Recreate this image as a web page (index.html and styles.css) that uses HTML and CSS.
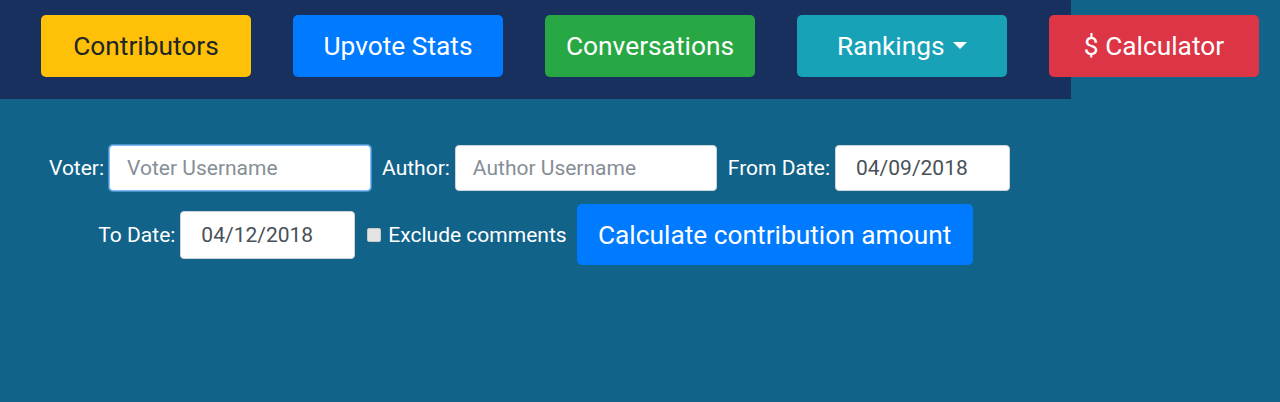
FILE: index.html
```html
<!DOCTYPE html>
<html lang="en">
<head>
  <meta charset="UTF-8">
  <title>Contribution Calculator</title>
  <link rel="stylesheet" href="styles.css">
</head>
<body>
  <div id="nav">
    <button class="navBtn yellow">Contributors</button>
    <button class="navBtn blue">Upvote Stats</button>
    <button class="navBtn green">Conversations</button>
    <button class="navBtn teal">Rankings <span class="caret"></span></button>
    <button class="navBtn red">$ Calculator</button>
  </div>

  <div id="form">
    <div class="row first">
      <label class="lbl">Voter:</label>
      <input class="field user focus" type="text" placeholder="Voter Username">
      <label class="lbl gapL">Author:</label>
      <input class="field user" type="text" placeholder="Author Username">
      <label class="lbl gapL">From Date:</label>
      <input class="field date" type="text" value="04/09/2018">
    </div>
    <div class="row">
      <label class="lbl">To Date:</label>
      <input class="field date tall" type="text" value="04/12/2018">
      <input class="check" type="checkbox" id="excl">
      <label class="lbl checkLbl" for="excl">Exclude comments</label>
      <button id="calcBtn">Calculate contribution amount</button>
    </div>
  </div>
</body>
</html>
```

FILE: styles.css
```css
body {
  font-family: Roboto, 'Liberation Sans', sans-serif;
  margin: 0;
  background-color: #12638a;
  color: white;
  overflow: hidden;
}
#nav {
  width: 1071px;
  height: 99px;
  background-color: #17305e;
  display: flex;
  align-items: center;
  padding-left: 41px;
  box-sizing: border-box;
  gap: 42px;
}
.navBtn {
  flex-shrink: 0;
  width: 210px;
  height: 62px;
  margin-top: -7px;
  border: none;
  border-radius: 5px;
  font-family: inherit;
  font-size: 26.3px;
  color: white;
  cursor: pointer;
}
.yellow { background-color: #ffc107; color: #212529; }
.blue { background-color: #007bff; }
.green { background-color: #28a745; }
.teal { background-color: #17a2b8; }
.red { background-color: #dc3545; }
.caret {
  display: inline-block;
  width: 0;
  height: 0;
  margin-left: 2px;
  vertical-align: 6px;
  border-top: 7px solid white;
  border-left: 7px solid transparent;
  border-right: 7px solid transparent;
}
#form {
  width: 1071px;
  padding-top: 46px;
  display: flex;
  flex-direction: column;
  gap: 13px;
}
.row {
  display: flex;
  justify-content: center;
  align-items: center;
}
.row.first {
  padding-right: 12px;
}
.lbl {
  font-size: 21px;
  margin-right: 5px;
}
.gapL {
  margin-left: 11px;
}
.field {
  height: 46px;
  box-sizing: border-box;
  border: 1px solid #ced4da;
  border-radius: 4px;
  background: white;
  font-family: inherit;
  font-size: 21px;
  color: #495057;
  outline: none;
}
.field::placeholder {
  color: #868e96;
}
.user {
  width: 262px;
  padding-left: 17px;
}
.focus {
  border-color: #80bdff;
  box-shadow: 0 0 0 1px rgba(128, 189, 255, 0.5);
}
.date {
  width: 175px;
  padding-left: 20px;
}
.tall {
  height: 48px;
}
.check {
  appearance: none;
  width: 14px;
  height: 14px;
  margin: 0 7px 0 12px;
  background: #e4e4e4;
  border: 1px solid #c8c8c8;
  border-radius: 2px;
}
.checkLbl {
  margin-right: 10px;
}
#calcBtn {
  width: 396px;
  height: 61px;
  border: none;
  border-radius: 5px;
  background-color: #007bff;
  color: white;
  font-family: inherit;
  font-size: 26.3px;
  cursor: pointer;
}
```
